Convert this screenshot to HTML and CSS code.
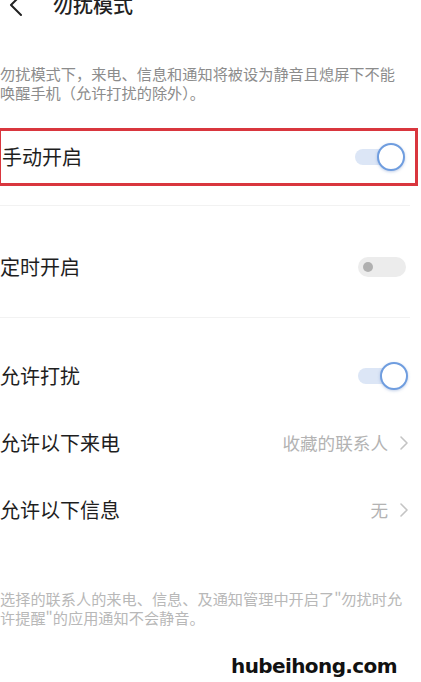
FILE: index.html
```html
<!DOCTYPE html>
<html lang="zh">
<head>
<meta charset="utf-8">
<link rel="stylesheet" href="styles.css">
</head>
<body>
<div class="page">
  <header class="topbar">
    <svg class="back" width="16" height="24" viewBox="0 0 16 24"><polyline points="13,2 3,12 13,22" fill="none" stroke="#222" stroke-width="2" stroke-linecap="round" stroke-linejoin="round"/></svg>
    <h1 class="title">勿扰模式</h1>
  </header>

  <p class="desc">勿扰模式下，来电、信息和通知将被设为静音且熄屏下不能唤醒手机（允许打扰的除外）。</p>

  <div class="row boxed">
    <span class="label">手动开启</span>
    <div class="switch on"><span class="track"></span><span class="knob"></span></div>
  </div>
  <div class="divider first"></div>

  <div class="row single">
    <span class="label">定时开启</span>
    <div class="switch off"><span class="track"></span><span class="dot"></span></div>
  </div>
  <div class="divider second"></div>

  <div class="group">
    <div class="row">
      <span class="label">允许打扰</span>
      <div class="switch on"><span class="track"></span><span class="knob"></span></div>
    </div>
    <div class="row">
      <span class="label">允许以下来电</span>
      <span class="value">收藏的联系人<svg class="chev" width="10" height="16" viewBox="0 0 10 16"><polyline points="2,2 8,8 2,14" fill="none" stroke="#c4c4c4" stroke-width="1.6" stroke-linecap="round" stroke-linejoin="round"/></svg></span>
    </div>
    <div class="row">
      <span class="label">允许以下信息</span>
      <span class="value">无<svg class="chev" width="10" height="16" viewBox="0 0 10 16"><polyline points="2,2 8,8 2,14" fill="none" stroke="#c4c4c4" stroke-width="1.6" stroke-linecap="round" stroke-linejoin="round"/></svg></span>
    </div>
  </div>

  <p class="note">选择的联系人的来电、信息、及通知管理中开启了"勿扰时允许提醒"的应用通知不会静音。</p>

  <div class="watermark">hubeihong.com</div>
</div>
</body>
</html>
```

FILE: styles.css
```css
html, body {
  margin: 0;
  padding: 0;
  background: #ffffff;
}
body {
  font-family: "Noto Sans CJK SC", "Noto Sans", sans-serif;
  color: #222222;
  overflow: hidden;
  width: 421px;
  height: 682px;
}
.page {
  width: 421px;
}
.topbar {
  display: flex;
  align-items: center;
  height: 24px;
  margin-top: -7px;
}
.back {
  margin-left: 8px;
  flex: none;
}
.title {
  margin: 0 0 0 29px;
  font-size: 20px;
  line-height: 24px;
  font-weight: 500;
  color: #222;
}
.desc {
  width: 402px;
  margin: 47px 0 0 0;
  font-size: 15.2px;
  line-height: 19px;
  color: #8c8c8c;
}
.row {
  display: flex;
  align-items: center;
  justify-content: space-between;
  height: 67px;
  padding-right: 13px;
}
.label {
  font-size: 20px;
  line-height: 24px;
  color: #1e1e1e;
}
.boxed {
  box-sizing: border-box;
  margin-top: 26px;
  margin-left: -2px;
  width: 420px;
  height: 58px;
  border: 3px solid #d9363e;
  padding-left: 1px;
  padding-right: 10px;
}
.divider {
  height: 1px;
  background: #f2f2f2;
  width: 410px;
}
.divider.first {
  margin-top: 19px;
}
.single {
  margin-top: 27px;
}
.divider.second {
  margin-top: 17px;
}
.group {
  margin-top: 24px;
}
.switch {
  position: relative;
  width: 50px;
  height: 30px;
  flex: none;
}
.switch.on .track {
  position: absolute;
  left: 0;
  top: 7px;
  width: 40px;
  height: 16px;
  border-radius: 8px;
  background: #dce6f6;
}
.switch.on .knob {
  position: absolute;
  right: 0;
  top: 1px;
  width: 24px;
  height: 24px;
  border-radius: 50%;
  background: #fff;
  border: 2.5px solid #6f9ddf;
  box-shadow: 0 1px 3px rgba(80, 120, 190, 0.35);
}
.switch.off {
  width: 48px;
  height: 20px;
  margin-right: 2px;
}
.switch.off .track {
  position: absolute;
  inset: 0;
  border-radius: 10px;
  background: #ececec;
}
.switch.off .dot {
  position: absolute;
  left: 5px;
  top: 5px;
  width: 10px;
  height: 10px;
  border-radius: 50%;
  background: #b0b0b0;
}
.value {
  display: flex;
  align-items: center;
  gap: 11px;
  font-size: 17.6px;
  color: #b3b3b3;
  margin-right: -1px;
}
.chev {
  flex: none;
}
.note {
  width: 410px;
  margin: 46px 0 0 0;
  font-size: 15.2px;
  line-height: 19px;
  color: #b8b8b8;
}
.watermark {
  margin-top: 27px;
  padding-left: 231px;
  font-family: "DejaVu Sans", sans-serif;
  font-weight: bold;
  font-size: 20px;
  letter-spacing: -0.6px;
  line-height: 24px;
  color: #111;
}
```
